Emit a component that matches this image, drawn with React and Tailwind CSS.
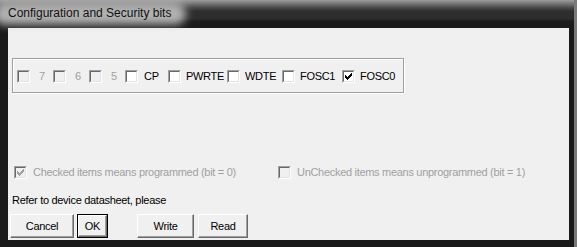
// Configuration and Security bits dialog (classic Windows look on an Aero frame)

function Check({ color }) {
  const cols = [3, 4, 5, 4, 3, 2, 1];
  return (
    <svg width="9" height="9" viewBox="0 0 9 9" shapeRendering="crispEdges" className="block">
      {cols.map((top, i) => (
        <rect key={i} x={i + 1} y={top} width="1" height="3" fill={color} />
      ))}
    </svg>
  );
}

function Box({ checked = false, disabled = false }) {
  return (
    <span className="inline-block w-[13px] h-[13px] shrink-0 border border-t-[#a0a0a0] border-l-[#a0a0a0] border-b-white border-r-white">
      <span
        className={
          disabled
            ? 'block w-full h-full border border-t-[#696969] border-l-[#696969] border-b-[#e3e3e3] border-r-[#e3e3e3] bg-[#f0f0f0]'
            : 'block w-full h-full border border-t-[#696969] border-l-[#696969] border-b-[#e3e3e3] border-r-[#e3e3e3] bg-white'
        }
      >
        {checked && <Check color={disabled ? '#a0a0a0' : '#000'} />}
      </span>
    </span>
  );
}

function Button({ label, width, isDefault = false }) {
  const face = (
    <div className="h-full w-full flex items-center justify-center bg-[#f0f0f0] border border-t-white border-l-white border-b-[#696969] border-r-[#696969] shadow-[inset_-1px_-1px_0_#a0a0a0]">
      {label}
    </div>
  );
  return (
    <div className={`h-[24px] shrink-0 ${isDefault ? 'border border-black' : ''}`} style={{ width }}>
      {face}
    </div>
  );
}

const bits = [
  { label: '7', w: 'w-[36px]', gap: 'ml-[9px]', disabled: true },
  { label: '6', w: 'w-[36px]', gap: 'ml-[9px]', disabled: true },
  { label: '5', w: 'w-[36px]', gap: 'ml-[9px]', disabled: true },
  { label: 'CP', w: 'w-[43px]', gap: 'ml-[6px]' },
  { label: 'PWRTE', w: 'w-[59px]', gap: 'ml-[5px]' },
  { label: 'WDTE', w: 'w-[55px]', gap: 'ml-[5px]' },
  { label: 'FOSC1', w: 'w-[60px]', gap: 'ml-[5px]' },
  { label: 'FOSC0', w: 'w-[60px]', gap: 'ml-[5px]', checked: true },
];

export default function App() {
  return (
    <div className="w-[577px] h-[247px] flex bg-[#1a1a1a] overflow-hidden font-['Liberation_Sans',Arial,sans-serif] text-[11px] leading-[13px] tracking-[-0.3px] text-black">
      <div className="w-[574px] flex flex-col">
        {/* title bar */}
        <div className="relative h-[28px] shrink-0 bg-[linear-gradient(to_bottom,#9c9c9c_0px,#7c7c7c_3px,#474747_8px,#2f2f2f_11px,#2c2c2c_19px,#1c1c1c_21px,#1a1a1a_28px)]">
          <span className="absolute left-[-6px] top-[3px] w-[192px] h-[22px] rounded-[11px] bg-[#d2d2d2] opacity-80 blur-[4px]" />
          <div className="relative pl-[8px] pt-[6px] text-[12px] leading-[14px] tracking-normal text-[#111]">
            Configuration and Security bits
          </div>
        </div>

        <div className="flex h-[212px]">
          <div className="w-[8px] shrink-0" />
          <div className="w-[561px] bg-[#f0f0f0] flex flex-col">
            {/* bit group */}
            <div className="ml-[4px] mt-[30px] w-[392px] h-[35px] border border-[#a0a0a0] shadow-[inset_1px_1px_0_#fff,1px_1px_0_#fff] flex items-start pl-[4px] pt-[11px]">
              {bits.map((b) => (
                <div key={b.label} className={`${b.w} flex items-center shrink-0`}>
                  <Box checked={b.checked} disabled={b.disabled} />
                  <span className={`${b.gap} ${b.disabled ? 'text-[#a0a0a0]' : 'text-black'}`}>{b.label}</span>
                </div>
              ))}
            </div>

            {/* legend */}
            <div className="mt-[73px] pl-[6px] flex items-center text-[#a0a0a0]">
              <div className="w-[264px] flex items-center shrink-0">
                <Box checked disabled />
                <span className="ml-[6px]">Checked items means programmed (bit = 0)</span>
              </div>
              <div className="flex items-center">
                <Box disabled />
                <span className="ml-[6px]">UnChecked items means unprogrammed (bit = 1)</span>
              </div>
            </div>

            <div className="mt-[15px] pl-[4px] h-[13px]">Refer to device datasheet, please</div>

            {/* buttons */}
            <div className="mt-[7px] pl-[2px] flex">
              <Button label="Cancel" width="64px" />
              <div className="ml-[3px]">
                <Button label="OK" width="31px" isDefault />
              </div>
              <div className="ml-[29px]">
                <Button label="Write" width="57px" />
              </div>
              <div className="ml-[4px]">
                <Button label="Read" width="50px" />
              </div>
            </div>
          </div>
        </div>
      </div>
      <div className="w-[3px] bg-[#7a7a7a]" />
    </div>
  );
}
